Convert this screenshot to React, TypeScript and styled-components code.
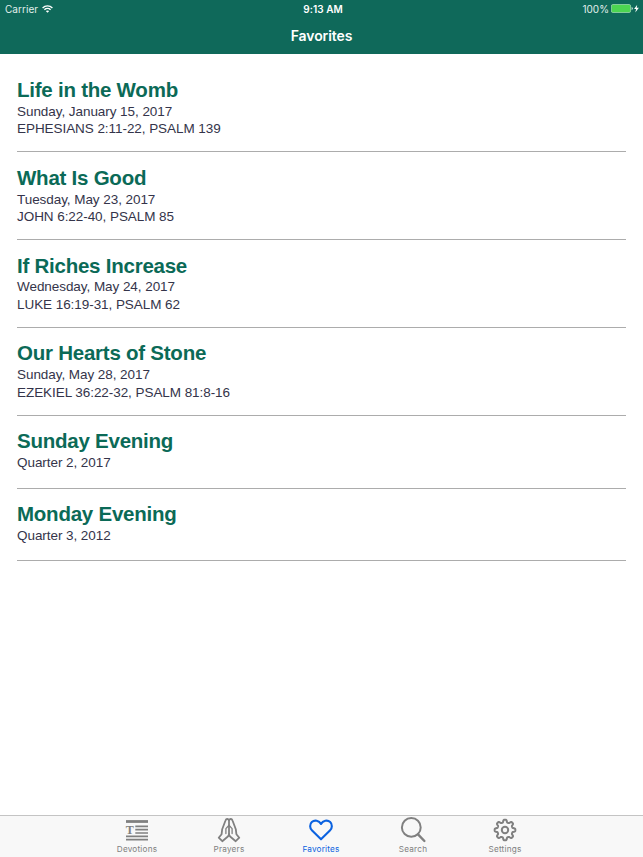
import React from 'react';
import styled, { createGlobalStyle } from 'styled-components';

const GlobalStyle = createGlobalStyle`
  html, body, #root { height: 100%; }
  body { margin: 0; background: #fff; overflow: hidden; }
  * { box-sizing: border-box; }
`;

const Screen = styled.div`
  height: 100vh;
  display: flex;
  flex-direction: column;
  font-family: 'Liberation Sans', Arial, sans-serif;
`;

const Header = styled.header`
  height: 53.6px;
  flex: none;
  background: #0f695a;
  color: #fff;
  font-family: Inter, sans-serif;
`;

const StatusBar = styled.div`
  height: 17px;
  padding: 0 4px 0 5px;
  display: grid;
  grid-template-columns: 1fr auto 1fr;
  align-items: center;
  font-size: 10px;
  line-height: 16px;
`;

const StatusGroup = styled.div<{ $end?: boolean }>`
  display: flex;
  align-items: center;
  gap: ${p => (p.$end ? 2 : 4)}px;
  justify-content: ${p => (p.$end ? 'flex-end' : 'flex-start')};
  color: #e2f0ec;
  letter-spacing: ${p => (p.$end ? 0 : 0.05)}px;
`;

const Clock = styled.div`
  font-weight: 600;
  letter-spacing: 0.06px;
  padding-left: 2px;
`;

const NavTitle = styled.h1`
  margin: 0;
  height: 36px;
  line-height: 37px;
  text-align: center;
  font-size: 14px;
  font-weight: 600;
  letter-spacing: -0.1px;
`;

const List = styled.main`
  flex: 1;
  padding: 11px 17px 0;
`;

const Entry = styled.article<{ $short: boolean }>`
  height: ${p => (p.$short ? 72.7 : 87.85)}px;
  padding-top: 12.3px;
  border-bottom: 1px solid #acacac;
`;

const EntryTitle = styled.h2`
  margin: 0;
  font-size: 20.5px;
  line-height: 25px;
  height: 25.9px;
  letter-spacing: -0.24px;
  font-weight: 700;
  color: #0b6a57;
  white-space: nowrap;
`;

const EntryLine = styled.p`
  margin: 0;
  font-size: 13.5px;
  line-height: 17.6px;
  letter-spacing: -0.06px;
  color: #34344a;
`;

const TabBar = styled.nav`
  height: 42px;
  flex: none;
  display: flex;
  justify-content: center;
  background: #f8f8f8;
  border-top: 1px solid #c4c4c4;
  padding-right: 1px;
`;

const Tab = styled.a<{ $active?: boolean }>`
  width: 92px;
  display: flex;
  flex-direction: column;
  align-items: center;
  color: ${p => (p.$active ? '#0b62e0' : '#808080')};
  font-family: Inter, sans-serif;
  font-size: 8.2px;
  line-height: 10px;
  letter-spacing: 0.2px;
`;

const TabIcon = styled.svg`
  width: 28px;
  height: 28px;
  flex: none;
  fill: none;
  stroke: currentColor;
  stroke-width: 2;
  stroke-linecap: round;
  stroke-linejoin: round;
`;

const favorites = [
  { title: 'Life in the Womb', lines: ['Sunday, January 15, 2017', 'EPHESIANS 2:11-22, PSALM 139'] },
  { title: 'What Is Good', lines: ['Tuesday, May 23, 2017', 'JOHN 6:22-40, PSALM 85'] },
  { title: 'If Riches Increase', lines: ['Wednesday, May 24, 2017', 'LUKE 16:19-31, PSALM 62'] },
  { title: 'Our Hearts of Stone', lines: ['Sunday, May 28, 2017', 'EZEKIEL 36:22-32, PSALM 81:8-16'] },
  { title: 'Sunday Evening', lines: ['Quarter 2, 2017'] },
  { title: 'Monday Evening', lines: ['Quarter 3, 2012'] },
];

const Wifi = () => (
  <svg width="11" height="8" viewBox="0 0 11 8" fill="none" stroke="#fff" strokeWidth="1.4">
    <path d="M.6 2.9C3.3.2 7.7.2 10.4 2.9M2.4 4.8c1.7-1.7 4.5-1.7 6.2 0" />
    <path d="M5.5 7.8 3.8 6.1c.9-.9 2.5-.9 3.4 0z" fill="#fff" stroke="none" />
  </svg>
);

const Battery = () => (
  <svg width="28" height="9" viewBox="0 0 28 9">
    <rect x=".4" y=".5" width="19.2" height="8" rx="1.5" fill="#4cd551" stroke="#a8dfb6" strokeWidth=".7" />
    <path d="M20.6 3v3q1.2-.4 1.2-1.5T20.6 3" fill="#d5eee4" />
    <path d="M26.2.7 23.1 5h2l-.8 3.4L27.9 3.8h-2.2z" fill="#fff" />
  </svg>
);

const Devotions = () => (
  <TabIcon viewBox="0 0 28 28">
    <g strokeLinecap="butt">
      <path d="M3 5.5h22" strokeWidth="2.8" />
      <path d="M12.3 10.4H25M12.3 13.7H25M12.3 17H25M3 20.3h22M3 23.6h22" strokeWidth="1.7" />
    </g>
    <text x="2.8" y="18" fill="currentColor" stroke="none" fontFamily="Liberation Serif, serif" fontWeight="700" fontSize="12">T</text>
  </TabIcon>
);

const Prayers = () => (
  <TabIcon viewBox="0 0 28 28">
    <g strokeWidth="1.8">
      <path d="M14 4.2C13 2.3 11 2.7 10.4 4.8L7.2 13.2 6.6 18.2 3.7 21.7 7.3 25.2 12.6 20.8Q14 19.6 14 18V4.2" />
      <path d="M14 4.2c1-1.9 3-1.5 3.6.6l3.2 8.4.6 5 2.9 3.5-3.6 3.5-5.3-4.4Q14 19.6 14 18" />
      <path d="M10.9 17.5V12.6L14 9.2M17.1 17.5V12.6L14 9.2" strokeWidth="1.3" />
    </g>
  </TabIcon>
);

const Heart = () => (
  <TabIcon viewBox="0 0 28 28">
    <path d="M14 23.3 5.1 14.6C2.5 12 2.6 8.2 4.8 6.1 7.6 3.5 12.1 4.5 14 8c1.9-3.5 6.4-4.5 9.2-1.9 2.2 2.1 2.3 5.9-.3 8.5z" strokeWidth="2.1" />
  </TabIcon>
);

const Search = () => (
  <TabIcon viewBox="0 0 28 28">
    <circle cx="12.3" cy="11.4" r="9.4" />
    <path d="m19 18.3 6.4 6.7" strokeWidth="2.4" />
  </TabIcon>
);

const gear = (() => {
  const pts: string[] = [];
  for (let i = 0; i <= 160; i++) {
    const a = (i / 160) * Math.PI * 2;
    const wave = Math.tanh(2.2 * Math.cos(8 * a)) / Math.tanh(2.2);
    const r = 9.05 + 1.3 * wave;
    pts.push(`${(14 + r * Math.cos(a)).toFixed(2)} ${(14 + r * Math.sin(a)).toFixed(2)}`);
  }
  return `M${pts.join('L')}Z`;
})();

const Settings = () => (
  <TabIcon viewBox="0 0 28 28">
    <path d={gear} />
    <circle cx="14" cy="14" r="3.2" />
  </TabIcon>
);

const tabs = [
  { label: 'Devotions', Icon: Devotions },
  { label: 'Prayers', Icon: Prayers },
  { label: 'Favorites', Icon: Heart },
  { label: 'Search', Icon: Search },
  { label: 'Settings', Icon: Settings },
];

export default function App() {
  return (
    <Screen>
      <GlobalStyle />
      <Header>
        <StatusBar>
          <StatusGroup>Carrier<Wifi /></StatusGroup>
          <Clock>9:13 AM</Clock>
          <StatusGroup $end>100%<Battery /></StatusGroup>
        </StatusBar>
        <NavTitle>Favorites</NavTitle>
      </Header>
      <List>
        {favorites.map(f => (
          <Entry key={f.title} $short={f.lines.length === 1}>
            <EntryTitle>{f.title}</EntryTitle>
            {f.lines.map(l => <EntryLine key={l}>{l}</EntryLine>)}
          </Entry>
        ))}
      </List>
      <TabBar>
        {tabs.map(({ label, Icon }) => (
          <Tab key={label} $active={label === 'Favorites'}>
            <Icon />
            {label}
          </Tab>
        ))}
      </TabBar>
    </Screen>
  );
}
